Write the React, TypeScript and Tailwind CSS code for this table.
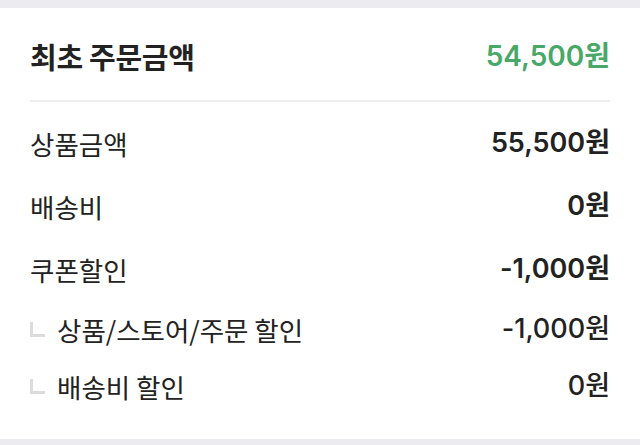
const rows = [
  { label: "상품금액", value: "55,500원" },
  { label: "배송비", value: "0원" },
  { label: "쿠폰할인", value: "-1,000원" },
];

const subRows = [
  { label: "상품/스토어/주문 할인", value: "-1,000원" },
  { label: "배송비 할인", value: "0원" },
];

const font = "font-['Noto_Sans_CJK_KR','Noto_Sans',sans-serif]";
const numFont = "font-['Inter','Noto_Sans_CJK_KR',sans-serif]";

const SubMark = () => (
  <span className="relative w-[15px] h-[15px] mr-[12px] shrink-0">
    <span className="absolute left-0 top-0 w-[3px] h-[15px] bg-[#dcdcdc]" />
    <span className="absolute left-0 bottom-0 w-[15px] h-[3px] bg-[#dcdcdc]" />
  </span>
);

export default function App() {
  return (
    <div className={`w-[640px] h-[445px] bg-[#ebebf0] pt-[8px] ${font}`}>
      <div className="bg-white h-[431px] px-[30px]">
        <div className="flex items-center justify-between pt-[30px] pb-[26px] border-b-2 border-[#eeeeee]">
          <span className="text-[29px] leading-[36px] font-bold text-[#222] tracking-[-0.3px]">최초 주문금액</span>
          <span className={`text-[28px] leading-[36px] font-semibold text-[#48a868] ${numFont}`}>54,500원</span>
        </div>
        <div className="pt-[10px]">
          {rows.map((r) => (
            <div key={r.label} className="flex items-center justify-between h-[63px]">
              <span className="text-[26.5px] text-[#222]">{r.label}</span>
              <span className={`text-[27px] font-semibold text-[#222] ${numFont}`}>{r.value}</span>
            </div>
          ))}
          {subRows.map((r) => (
            <div key={r.label} className="flex items-center justify-between h-[57px]">
              <span className="flex items-center">
                <SubMark />
                <span className="text-[26.5px] text-[#222]">{r.label}</span>
              </span>
              <span className={`text-[27px] font-medium text-[#222] ${numFont}`}>{r.value}</span>
            </div>
          ))}
        </div>
      </div>
    </div>
  );
}
